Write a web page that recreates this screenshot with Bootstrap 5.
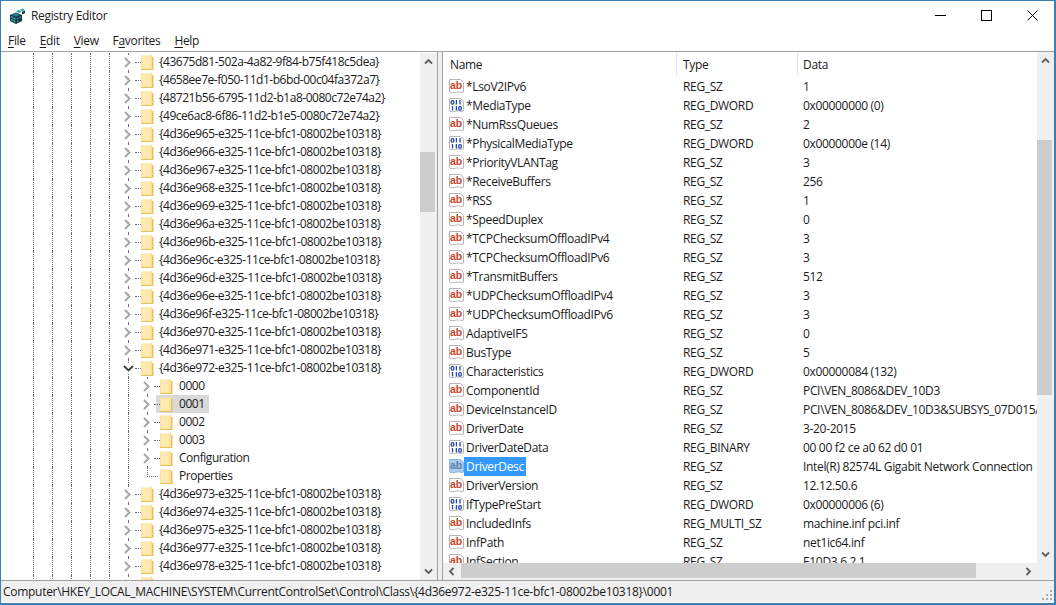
<!DOCTYPE html>
<html>
<head>
    <meta charset="UTF-8">
    <title>Registry Editor</title>
    <link href="https://cdn.jsdelivr.net/npm/bootstrap@5.3.0/dist/css/bootstrap.min.css" rel="stylesheet">
    <style>
        html, body { height: 100%; overflow: hidden; background: #fff; }
        body, .reg-win { font-family: "Open Sans", "Liberation Sans", sans-serif; font-size: 12px; color: #1a1a1a; line-height: 16px; }
        .reg-win { width: 1056px; height: 605px; border: solid #3c7fb5; border-width: 1px 2px 2px 1px; letter-spacing: -.33px; }
        .reg-title { height: 29px; padding-left: 8px; margin-right: -1px; }
        .reg-title-text { margin-left: 5px; }
        .reg-ctrl { width: 46px; height: 29px; }
        .reg-menu { height: 21px; padding-left: 7px; border-bottom: 1px solid #a0a0a0; box-sizing: content-box; }
        .reg-menu span { margin-right: 14px; }
        .reg-menu u { text-underline-offset: 2px; }
        .reg-panes { height: 528px; background: #f0f0f0; }

        .reg-tree { width: 437px; background: #fff; border-right: 1px solid #a0a0a0; padding-top: 1px; letter-spacing: -.47px; }
        .tree-rows { width: 419px; }
        .tree-row { height: 18px; padding-left: 32px; }
        .tree-guide { width: 19px; height: 18px; border-left: 1px dotted #707070; flex: none; }
        .tree-twist { width: 13px; height: 18px; flex: none; position: relative; border-left: 1px dotted #707070; }
        .tree-twist::after { content: ""; position: absolute; left: 6px; width: 6px; top: 9px; border-top: 1px dotted #707070; }
        .tree-twist svg { position: absolute; left: -6px; top: 3px; background: #fff; }
        .tree-twist svg.tw-down { top: 5px; }
        .tree-last { height: 10px; border-left: 1px dotted #707070; border-bottom: 1px dotted #707070; width: 11px; margin-right: 2px; }
        .tree-lbl { height: 18px; padding: 0 0 0 4px; margin-left: -4px; gap: 5px; }
        .tree-kid { padding-left: 1px; }
        .tree-lbl.is-sel { background: #d9d9d9; }
        .reg-split { width: 4px; }

        .reg-list { width: 612px; background: #fff; border-left: 1px solid #a0a0a0; }
        .list-head { height: 25px; }
        .list-head div { height: 24px; line-height: 26px; border-right: 1px solid #e5e5e5; padding-left: 6px; }
        .list-head .c-name { padding-left: 7px; }
        .list-head .c-data { padding-left: 5px; }
        .c-name { width: 234px; flex: none; }
        .c-type { width: 121px; flex: none; }
        .c-data { flex: 1 1 0; min-width: 0; }
        .list-rows { height: 486px; }
        .list-row { height: 19px; line-height: 19px; padding-left: 6px; }
        .list-row .c-name { width: 228px; gap: 2px; }
        .list-row .c-type { padding-left: 6px; }
        .list-row .c-data { padding-left: 5px; }
        .name-sel { background: #3399ff; color: #fff; padding: 0 2px; margin-left: -2px; }

        .sb-v { width: 17px; background: #f0f0f0; flex: none; }
        .sb-h { height: 17px; background: #f0f0f0; flex: none; }
        .sb-arrow { width: 17px; height: 17px; flex: none; }
        .sb-thumb { background: #cdcdcd; }
        .sb-thumb-tree { width: 15px; height: 60px; margin-top: 82px; }
        .sb-thumb-list { width: 15px; height: 255px; margin-top: 71px; }
        .sb-thumb-bottom { width: 515px; height: 15px; margin-left: 1px; }
        .sb-corner { width: 17px; }
        .reg-status { height: 22px; background: #f0f0f0; border-top: 1px solid #a0a0a0; padding: 1px 0 0 2px; position: relative; letter-spacing: -.29px; }
        .reg-grip { position: absolute; right: 1px; bottom: 1px; }
    </style>
</head>
<body class="m-0">
    <svg width="0" height="0" class="position-absolute">
        <defs>
            <symbol id="ic-ab" viewBox="0 0 15 15">
                <path d="M.5.5h11l3 3v9.500c-2 1.500-4-.8-7 0s-5 1.200-7 0z" fill="#fff" stroke="#b5b5b5"/>
                <text x="1" y="10" font-family="Liberation Sans, sans-serif" font-size="10.500" font-weight="700" letter-spacing="0" fill="#c8452c">ab</text>
            </symbol>
            <symbol id="ic-ab-sel" viewBox="0 0 15 15">
                <path d="M.5.5h11l3 3v9.500c-2 1.500-4-.8-7 0s-5 1.200-7 0z" fill="#a8cdf3" stroke="#8fb4dc"/>
                <text x="1" y="10" font-family="Liberation Sans, sans-serif" font-size="10.500" font-weight="700" letter-spacing="0" fill="#5f7fae">ab</text>
            </symbol>
            <symbol id="ic-bin" viewBox="0 0 15 15">
                <path d="M.5.5h11l3 3v9.500c-2 1.500-4-.8-7 0s-5 1.200-7 0z" fill="#fff" stroke="#b5b5b5"/>
                <g fill="none" stroke="#2748a8" stroke-width="1.300">
                    <rect x="2.200" y="2.700" width="2.600" height="3.400" rx="1"/>
                    <path d="M7.400 2v4.600M11 2v4.600M3.500 8v4.600M7.400 8v4.600"/>
                    <rect x="9.700" y="8.700" width="2.600" height="3.400" rx="1"/>
                </g>
            </symbol>
            <symbol id="ic-folder" viewBox="0 0 13 16">
                <path d="M0 1.500h9.500L11 0v16H0z" fill="#fbe29a"/>
                <path d="M11 3h1.500v13H0v-1h11z" fill="#e8c25f"/>
                <path d="M1 2.500h8v12H1z" fill="#fdeab0"/>
            </symbol>
            <symbol id="ic-right" viewBox="0 0 9 13">
                <path d="M2 2l4.500 4.500L2 11" fill="none" stroke="#a6a6a6" stroke-width="2"/>
            </symbol>
            <symbol id="ic-down" viewBox="0 0 11 9">
                <path d="M1 2l4.500 4.500L10 2" fill="none" stroke="#404040" stroke-width="1.800"/>
            </symbol>
        </defs>
    </svg>

    <div class="reg-win d-flex flex-column overflow-hidden">
        <div class="reg-title d-flex align-items-center">
            <svg width="17" height="16" viewBox="0 0 17 16">
                <path d="M1 7l6-2.500 6 2.500v6l-6 3-6-3z" fill="#16353f"/>
                <path d="M2 8l1.700.8v1.600L2 9.600zM4.500 9.200l1.800.8v1.700l-1.800-.8zM2 10.800l1.700.8v1.400L2 12.200zM4.500 12l1.800.8v1.600l-1.800-.9z" fill="#43c4c0"/>
                <path d="M8 10l1.700-.8v1.700L8 11.700zM10.500 8.800l1.600-.8v1.700l-1.600.8zM8 13l1.700-.8v1.600l-1.700.8z" fill="#2c8f9c"/>
                <path d="M3 6.800L7 5l4 1.800-4 1.900z" fill="#2b7f96"/>
                <path d="M7 3.500L10 2l3 1.500-3 1.500zM11 2l2.500-1.500L16 2l-2.500 1.300z" fill="#3a9fb0"/>
                <path d="M13 6.500V4l3-1.500v2.700z" fill="#16353f"/>
            </svg>
            <span class="reg-title-text flex-grow-1">Registry Editor</span>
            <div class="reg-ctrl d-flex align-items-center justify-content-center"><svg width="11" height="11"><rect y="5" width="11" height="1" fill="#000"/></svg></div>
            <div class="reg-ctrl d-flex align-items-center justify-content-center"><svg width="11" height="11"><rect x=".5" y=".5" width="10" height="10" fill="none" stroke="#000"/></svg></div>
            <div class="reg-ctrl d-flex align-items-center justify-content-center"><svg width="11" height="11"><path d="M.5.500l10 10M10.500.500l-10 10" stroke="#000"/></svg></div>
        </div>
        <div class="reg-menu d-flex align-items-center">
            <span><u>F</u>ile</span><span><u>E</u>dit</span><span><u>V</u>iew</span><span>F<u>a</u>vorites</span><span><u>H</u>elp</span>
        </div>
        <div class="reg-panes d-flex">
            <div class="reg-tree d-flex overflow-hidden">
                <div id="treeRows" class="tree-rows overflow-hidden text-nowrap"></div>
                <div class="sb-v d-flex flex-column">
                    <div class="sb-arrow d-flex align-items-center justify-content-center"><svg width="9" height="7"><path d="M1 5.500l3.500-3.500L8 5.500" fill="none" stroke="#606060" stroke-width="1.800"/></svg></div>
                    <div class="sb-thumb sb-thumb-tree"></div>
                    <div class="flex-grow-1"></div>
                    <div class="sb-arrow d-flex align-items-center justify-content-center"><svg width="9" height="7"><path d="M1 1.500L4.500 5 8 1.500" fill="none" stroke="#606060" stroke-width="1.800"/></svg></div>
                </div>
            </div>
            <div class="reg-split"></div>
            <div class="reg-list d-flex flex-column overflow-hidden">
                <div class="d-flex flex-grow-1 overflow-hidden">
                    <div class="flex-grow-1 overflow-hidden">
                        <div class="list-head d-flex">
                            <div class="c-name">Name</div>
                            <div class="c-type">Type</div>
                            <div class="c-data border-0">Data</div>
                        </div>
                        <div id="listRows" class="list-rows overflow-hidden text-nowrap"></div>
                    </div>
                    <div class="sb-v d-flex flex-column">
                        <div class="sb-arrow d-flex align-items-center justify-content-center"><svg width="9" height="7"><path d="M1 5.500l3.500-3.500L8 5.500" fill="none" stroke="#606060" stroke-width="1.800"/></svg></div>
                        <div class="sb-thumb sb-thumb-list"></div>
                        <div class="flex-grow-1"></div>
                        <div class="sb-arrow d-flex align-items-center justify-content-center"><svg width="9" height="7"><path d="M1 1.500L4.500 5 8 1.500" fill="none" stroke="#606060" stroke-width="1.800"/></svg></div>
                    </div>
                </div>
                <div class="sb-h d-flex">
                    <div class="sb-arrow d-flex align-items-center justify-content-center"><svg width="7" height="9"><path d="M5.500 1L2 4.500 5.500 8" fill="none" stroke="#606060" stroke-width="1.800"/></svg></div>
                    <div class="sb-thumb sb-thumb-bottom"></div>
                    <div class="flex-grow-1"></div>
                    <div class="sb-arrow d-flex align-items-center justify-content-center"><svg width="7" height="9"><path d="M1.500 1L5 4.500 1.500 8" fill="none" stroke="#606060" stroke-width="1.800"/></svg></div>
                    <div class="sb-corner"></div>
                </div>
            </div>
        </div>
        <div class="reg-status d-flex align-items-center text-nowrap">
            Computer\HKEY_LOCAL_MACHINE\SYSTEM\CurrentControlSet\Control\Class\{4d36e972-e325-11ce-bfc1-08002be10318}\0001
            <svg class="reg-grip" width="12" height="12" fill="#a8a8a8"><rect x="9" y="1" width="2" height="2"/><rect x="5" y="5" width="2" height="2"/><rect x="9" y="5" width="2" height="2"/><rect x="1" y="9" width="2" height="2"/><rect x="5" y="9" width="2" height="2"/><rect x="9" y="9" width="2" height="2"/></svg>
        </div>
    </div>

    <script>
        // Tree rows: first the four odd keys, then the 4d36e9xx class keys
        const suffix = '-e325-11ce-bfc1-08002be10318';
        const before = ['43675d81-502a-4a82-9f84-b75f418c5dea', '4658ee7e-f050-11d1-b6bd-00c04fa372a7',
            '48721b56-6795-11d2-b1a8-0080c72e74a2', '49ce6ac8-6f86-11d2-b1e5-0080c72e74a2']
            .concat(['4d36e965', '4d36e966', '4d36e967', '4d36e968', '4d36e969', '4d36e96a', '4d36e96b', '4d36e96c',
                '4d36e96d', '4d36e96e', '4d36e96f', '4d36e970', '4d36e971'].map(k => k + suffix));
        const after = ['4d36e973', '4d36e974', '4d36e975', '4d36e977', '4d36e978'].map(k => k + suffix);

        const guides = '<span class="tree-guide"></span>'.repeat(5);
        const use = (id, w, h, cls = '') => `<svg width="${w}" height="${h}" class="${cls}"><use href="#${id}"/></svg>`;
        const label = (text, sel, kid) => `<span class="tree-lbl d-flex align-items-center${sel ? ' is-sel' : ''}">${use('ic-folder', 13, 16)}<span class="pe-1${kid ? ' tree-kid' : ''}">${text}</span></span>`;

        function keyRow(text, down) {
            const icon = down ? use('ic-down', 11, 9, 'tw-down') : use('ic-right', 9, 13);
            return `<div class="tree-row d-flex">${guides}<span class="tree-twist">${icon}</span>${label(text ? '{' + text + '}' : '')}</div>`;
        }
        function childRow(text, sel) {
            return `<div class="tree-row d-flex">${guides}<span class="tree-guide"></span><span class="tree-twist">${use('ic-right', 9, 13)}</span>${label(text, sel, true)}</div>`;
        }

        let tree = before.map(t => keyRow(t)).join('');
        tree += keyRow('4d36e972' + suffix, true);
        tree += childRow('0000') + childRow('0001', true) + childRow('0002') + childRow('0003') + childRow('Configuration');
        tree += `<div class="tree-row d-flex">${guides}<span class="tree-guide"></span><span class="tree-last flex-shrink-0"></span>${label('Properties', false, true)}</div>`;
        tree += after.map(t => keyRow(t)).join('');
        tree += keyRow(''); // only the top of this folder shows above the status bar
        document.getElementById('treeRows').innerHTML = tree;

        // Values of the 0001 key: name, type, data
        const values = [
            ['*LsoV2IPv6', 'REG_SZ', '1'], ['*MediaType', 'REG_DWORD', '0x00000000 (0)'],
            ['*NumRssQueues', 'REG_SZ', '2'], ['*PhysicalMediaType', 'REG_DWORD', '0x0000000e (14)'],
            ['*PriorityVLANTag', 'REG_SZ', '3'], ['*ReceiveBuffers', 'REG_SZ', '256'],
            ['*RSS', 'REG_SZ', '1'], ['*SpeedDuplex', 'REG_SZ', '0'],
            ['*TCPChecksumOffloadIPv4', 'REG_SZ', '3'], ['*TCPChecksumOffloadIPv6', 'REG_SZ', '3'],
            ['*TransmitBuffers', 'REG_SZ', '512'], ['*UDPChecksumOffloadIPv4', 'REG_SZ', '3'],
            ['*UDPChecksumOffloadIPv6', 'REG_SZ', '3'], ['AdaptiveIFS', 'REG_SZ', '0'],
            ['BusType', 'REG_SZ', '5'], ['Characteristics', 'REG_DWORD', '0x00000084 (132)'],
            ['ComponentId', 'REG_SZ', 'PCI\\VEN_8086&amp;DEV_10D3'],
            ['DeviceInstanceID', 'REG_SZ', 'PCI\\VEN_8086&amp;DEV_10D3&amp;SUBSYS_07D015A'],
            ['DriverDate', 'REG_SZ', '3-20-2015'], ['DriverDateData', 'REG_BINARY', '00 00 f2 ce a0 62 d0 01'],
            ['DriverDesc', 'REG_SZ', 'Intel(R) 82574L Gigabit Network Connection'], ['DriverVersion', 'REG_SZ', '12.12.50.6'],
            ['IfTypePreStart', 'REG_DWORD', '0x00000006 (6)'], ['IncludedInfs', 'REG_MULTI_SZ', 'machine.inf pci.inf'],
            ['InfPath', 'REG_SZ', 'net1ic64.inf'], ['InfSection', 'REG_SZ', 'E10D3.6.2.1']
        ];
        document.getElementById('listRows').innerHTML = values.map(([name, type, data]) => {
            const sel = name === 'DriverDesc';
            const bin = type === 'REG_DWORD' || type === 'REG_BINARY';
            const icon = use(sel ? 'ic-ab-sel' : bin ? 'ic-bin' : 'ic-ab', 15, 15);
            return `<div class="list-row d-flex">
                <div class="c-name d-flex align-items-center">${icon}<span class="${sel ? 'name-sel' : ''}">${name}</span></div>
                <div class="c-type">${type}</div>
                <div class="c-data overflow-hidden">${data}</div>
            </div>`;
        }).join('');
    </script>
    <script src="https://cdn.jsdelivr.net/npm/bootstrap@5.3.0/dist/js/bootstrap.bundle.min.js"></script>
</body>
</html>
